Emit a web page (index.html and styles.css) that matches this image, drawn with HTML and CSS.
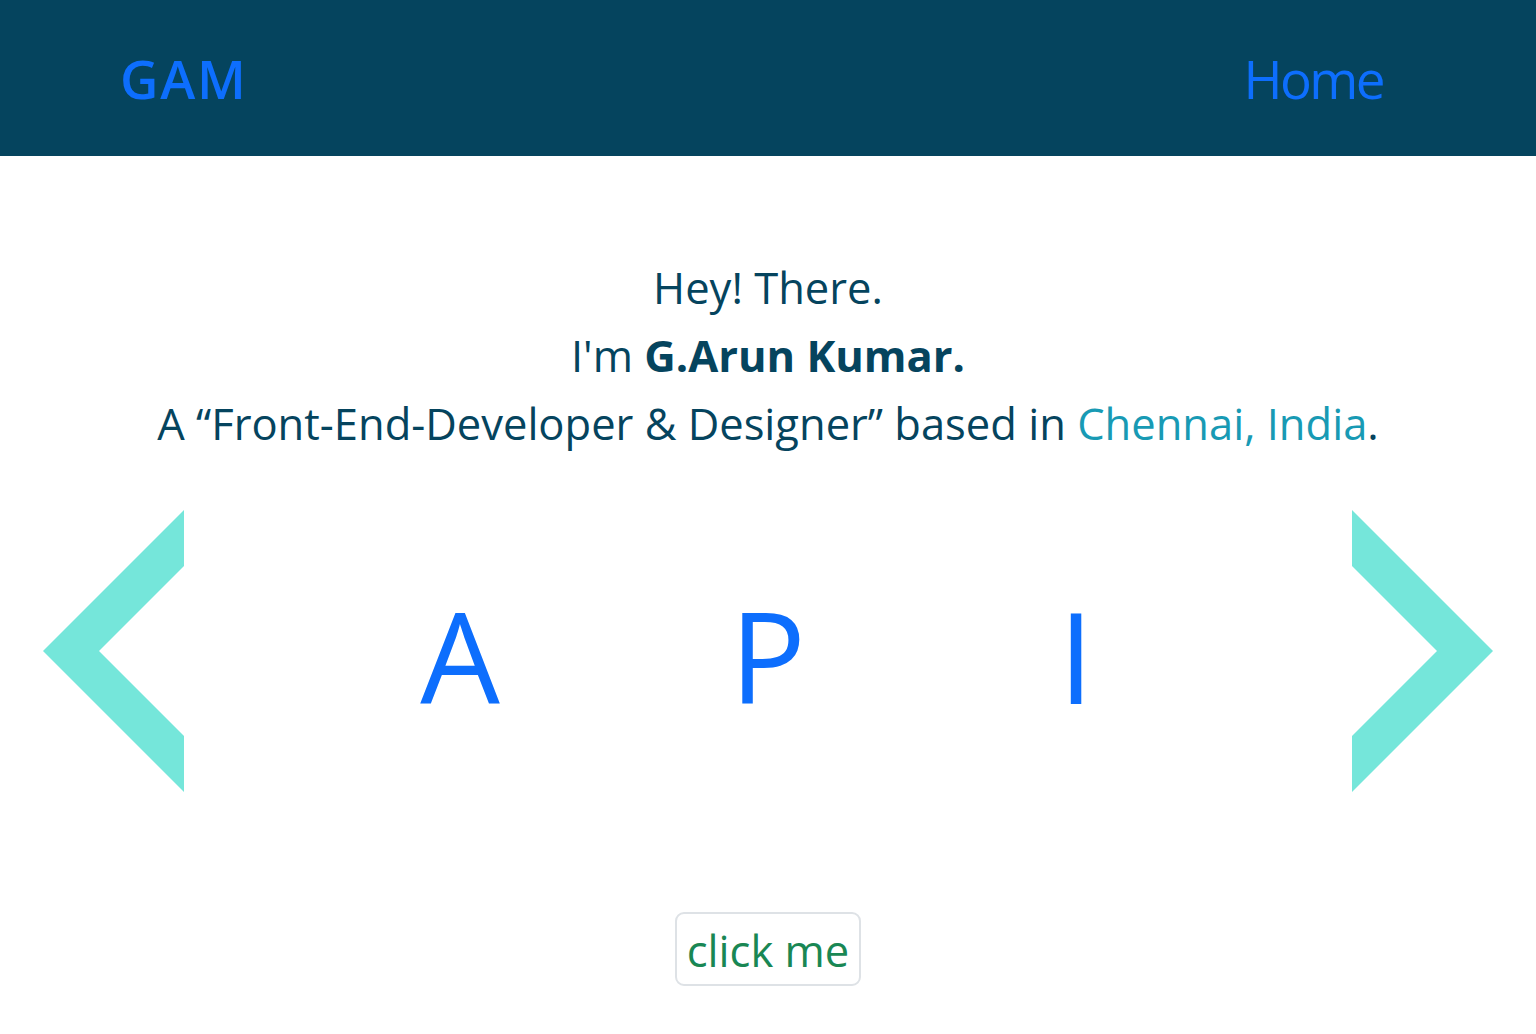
FILE: index.html
```html
<!DOCTYPE html>
<html lang="en">
<head>
<meta charset="utf-8">
<title>GAM</title>
<link rel="stylesheet" href="styles.css">
</head>
<body>
<header class="topbar">
  <a class="brand" href="#">GAM</a>
  <a class="nav-link" href="#">Home</a>
</header>
<main class="main">
  <section class="intro">
    <p class="line">Hey! There.</p>
    <p class="line">I'm <strong>G.Arun Kumar.</strong></p>
    <p class="line">A “Front-End-Developer &amp; Designer” based in <span class="place">Chennai, India</span>.</p>
  </section>
  <section class="carousel">
    <svg class="chev" viewBox="0 0 141 282" aria-hidden="true"><polygon points="141,0 0,141 141,282 141,226 56,141 141,56"/></svg>
    <div class="letters">
      <span class="letter">A</span>
      <span class="letter">P</span>
      <span class="letter">I</span>
    </div>
    <svg class="chev" viewBox="0 0 141 282" aria-hidden="true"><polygon points="0,0 141,141 0,282 0,226 85,141 0,56"/></svg>
  </section>
  <div class="actions">
    <button class="btn" type="button">click me</button>
  </div>
</main>
</body>
</html>
```
FILE: styles.css
```css
* { box-sizing: border-box; }
html, body { margin: 0; padding: 0; }
body {
  font-family: "Open Sans", "Noto Sans", sans-serif;
  background: #ffffff;
  color: #05445E;
}
.topbar {
  height: 156px;
  background: #05445E;
  display: flex;
  align-items: center;
  justify-content: space-between;
  padding: 0 153px 0 120px;
}
.brand, .nav-link {
  color: #0d6efd;
  text-decoration: none;
  font-size: 53px;
  line-height: 1;
}
.brand { font-weight: 600; letter-spacing: 1.8px; }
.nav-link { font-weight: 400; letter-spacing: -2.6px; }
.main {
  display: flex;
  flex-direction: column;
}
.intro {
  margin-top: 98px;
  text-align: center;
}
.line {
  margin: 0;
  font-size: 43.5px;
  line-height: 68px;
}
.line strong { font-weight: 700; }
.place { color: #189AB4; }
.carousel {
  margin-top: 52px;
  height: 282px;
  display: flex;
  align-items: center;
  padding: 0 43px;
}
.chev {
  width: 141px;
  height: 282px;
  flex: none;
  fill: #75E6DA;
}
.letters {
  flex: 1;
  display: grid;
  grid-template-columns: repeat(3, 308px);
  justify-content: center;
  padding-top: 8px;
}
.letter {
  text-align: center;
  font-size: 126px;
  font-weight: 400;
  line-height: 1;
  color: #0d6efd;
}
.actions {
  margin-top: 120px;
  display: flex;
  justify-content: center;
}
.btn {
  width: 186px;
  height: 74px;
  border: 2px solid #dee2e6;
  border-radius: 9px;
  background: #ffffff;
  color: #198754;
  font-family: "Open Sans", "Noto Sans", sans-serif;
  font-size: 43.5px;
  padding: 3px 0 0;
  line-height: 1;
}
```
